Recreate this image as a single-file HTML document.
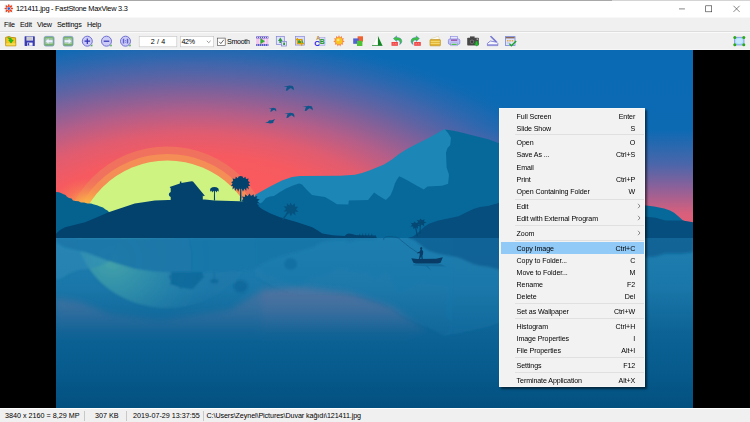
<!DOCTYPE html>
<html>
<head>
<meta charset="utf-8">
<title>121411.jpg - FastStone MaxView 3.3</title>
<style>
html,body{margin:0;padding:0;}
body{width:750px;height:422px;overflow:hidden;background:#000;position:relative;font-family:"Liberation Sans",sans-serif;color:#000;}
.abs{position:absolute;}
#titlebar{left:0;top:0;width:750px;height:18px;background:#fff;border-top:1px solid #a8a8a8;border-bottom:1px solid #f8f8f8;box-sizing:border-box;}
#title{left:15.9px;top:3.2px;font-size:7.4px;line-height:11px;white-space:nowrap;color:#000;letter-spacing:-0.26px;}
#menubar{left:0;top:18px;width:750px;height:13px;background:#f0f0f0;}
.mi{position:absolute;top:2.2px;font-size:7.2px;line-height:10px;white-space:nowrap;letter-spacing:-0.17px;}
#toolbar{left:0;top:31px;width:750px;height:19px;background:#f0f0f0;border-top:1px solid #dddddd;border-bottom:1px solid #f7f7f7;box-shadow:inset 0 1px 0 #fafafa;box-sizing:border-box;}
.tt{font-size:7.1px;line-height:10.4px;white-space:nowrap;letter-spacing:-0.15px;}
#statusbar{left:0;top:408px;width:750px;height:14px;background:#f0f0f0;border-top:1px solid #fff;box-sizing:border-box;}
.st{position:absolute;top:2.4px;font-size:7.2px;line-height:10px;white-space:nowrap;}
.ssep{position:absolute;top:2px;width:1px;height:10px;background:#c8c8c8;}
#scene{left:0;top:0;width:750px;height:422px;}
#menu{left:499px;top:108px;width:146.3px;height:278.8px;background:#f2f2f2;box-shadow:1.5px 1.5px 2px rgba(0,0,0,.55);border:1px solid #f7f7f7;box-sizing:border-box;}
.r{position:absolute;left:16.6px;width:118.6px;height:12px;font-size:7.1px;line-height:12px;white-space:nowrap;letter-spacing:-0.1px;}
.r b{position:absolute;right:0;top:0;font-weight:normal;}
.sep{position:absolute;left:14.6px;width:129.4px;height:1px;background:#e0e0e0;}
#hl{position:absolute;left:0.7px;top:132.9px;width:143.4px;height:11.8px;background:#91c9f7;}
.ar{position:absolute;left:137px;width:4px;height:6px;}
</style>
</head>
<body>
<svg id="scene" class="abs" viewBox="0 0 750 422">
<defs>
<clipPath id="wclip"><rect x="56" y="238" width="637" height="170"/></clipPath>
<clipPath id="imgclip"><rect x="56" y="50" width="637" height="358"/></clipPath>
<linearGradient id="skyL" x1="0" y1="50" x2="0" y2="240" gradientUnits="userSpaceOnUse">
<stop offset="0" stop-color="#0a6ab4"/>
<stop offset="0.42" stop-color="#0c6ab3"/>
<stop offset="0.6" stop-color="#4a66aa"/>
<stop offset="0.72" stop-color="#8a619a"/>
<stop offset="0.86" stop-color="#d85f7c"/>
<stop offset="1" stop-color="#f25d6c"/>
</linearGradient>
<radialGradient id="glow" cx="0" cy="0" r="1" gradientUnits="userSpaceOnUse" gradientTransform="translate(195 245) scale(415 215)">
<stop offset="0" stop-color="#fd5b58" stop-opacity="1"/>
<stop offset="0.3" stop-color="#fa5a5c" stop-opacity="1"/>
<stop offset="0.42" stop-color="#f65a60" stop-opacity="1"/>
<stop offset="0.52" stop-color="#e05c70" stop-opacity="1"/>
<stop offset="0.62" stop-color="#b85e88" stop-opacity="0.97"/>
<stop offset="0.72" stop-color="#8a6098" stop-opacity="0.9"/>
<stop offset="0.84" stop-color="#5a64a8" stop-opacity="0.7"/>
<stop offset="0.93" stop-color="#3a67ae" stop-opacity="0.35"/>
<stop offset="1" stop-color="#0a6ab4" stop-opacity="0"/>
</radialGradient>
<radialGradient id="hglow" cx="0.5" cy="0.5" r="0.5">
<stop offset="0" stop-color="#fcb846" stop-opacity="1"/>
<stop offset="0.3" stop-color="#faa84a" stop-opacity="0.8"/>
<stop offset="0.6" stop-color="#f8944c" stop-opacity="0.4"/>
<stop offset="1" stop-color="#f6804e" stop-opacity="0"/>
</radialGradient>
<linearGradient id="water" x1="0" y1="238" x2="0" y2="408" gradientUnits="userSpaceOnUse">
<stop offset="0" stop-color="#2080b1"/>
<stop offset="0.3" stop-color="#1a76a8"/>
<stop offset="0.55" stop-color="#0d6396"/>
<stop offset="0.8" stop-color="#065a8c"/>
<stop offset="1" stop-color="#03507f"/>
</linearGradient>
</defs>
<g clip-path="url(#imgclip)">
<rect x="56" y="50" width="637" height="190" fill="url(#skyL)"/>
<rect x="56" y="50" width="637" height="190" fill="url(#glow)"/>
<!-- sun -->
<circle cx="167.3" cy="252.5" r="106" fill="#f0715e"/>
<circle cx="167.3" cy="252.5" r="98.6" fill="#f48d56"/>
<ellipse cx="88" cy="205" rx="36" ry="27" fill="url(#hglow)"/>
<circle cx="167.3" cy="252.5" r="92" fill="#cff381"/>
<!-- left mountain -->
<path d="M56 192 L59 192.2 L61.5 193.2 L63.5 194.2 L65.5 195 L67 196.8 L69 198 L71.5 198.6 L73 200.4 L75.5 201 L78.5 201.2 L81 202.4 L84 202.6 L87.5 203.4 L91 203.6 L94 204.6 L97 205.2 L100 206.4 L103 207.6 L105.5 209.4 L107.5 210.4 L109 212 L120 240 L56 240Z" fill="#05628f"/>
<!-- back mountain light -->
<path d="M255 195 L262 191 L272 185.5 L282 180.5 L292 177 L300 176 L340 175.8 L355 174.8 L362 173 L370 170.3 L384 164.4 L392 159.5 L399 154.1 L407 149 L414 145.2 L422 141.2 L429 137.8 L437 133.2 L443.5 129.4 L447 129.6 L452 136 L452 240 L255 240Z" fill="#1c86b6"/>
<!-- mid mountains + right face -->
<path d="M256 205 L262 202.5 L266 198 L270 196.5 L274 196 L280 192 L286 188.5 L293 185.5 L299 183.6 L302 184.5 L306 189 L312 195 L318 196 L325 197 L331 200.5 L337 204.2 L348.3 204.4 L348.9 200.6 L368.1 200 L374.1 192.6 L378 195.2 L382 197.8 L385.9 200 L390.4 195.5 L393 189.5 L394.8 183.7 L397 179.5 L399.2 176.3 L403 178 L408.1 180.7 L416 185.2 L423.8 189.6 L427.4 186.6 L442.2 185.8 L448.1 183.7 L449 174.8 L446.6 167.4 L446 152.6 L447.5 148 L450.2 145.2 L451 137.8 L448 133 L445 129.5 L452 130.6 L458.5 131.8 L473.3 135.4 L488.1 139.3 L498.5 143.1 L520 150 L520 240 L256 240Z" fill="#07699a"/>
<!-- right small hill -->
<path d="M640 205 L646.4 205.4 L654.2 206.4 L664.2 208.5 L670 210.5 L674.1 212.8 L678 216 L682.7 220.2 L686 222 L693 224 L693 240 L640 240Z" fill="#07699a"/>
<!-- dark hills right -->
<path d="M408 238 L413 236.5 L420 231 L424 227 L428.9 223.7 L437.7 220.7 L448 218.5 L458.5 216.3 L466 212.5 L473.3 208.9 L480 207 L488.1 205.9 L498.5 203 L520 200 L560 203 L600 212 L640 216.5 L646.4 216.7 L655.6 217.7 L660 219 L665.6 220.6 L682.7 220.6 L693.3 222.4 L694 240 L408 240Z" fill="#054e7d"/>
<!-- island -->
<path d="M56 233.8 L60 230 L65 227.3 L75 224.8 L85 222.3 L97 217.3 L108.6 212.3 L122 207.8 L134.8 203.6 L145 202 L154.7 200.6 L168.3 199.9 L204.8 199.5 L214.7 200.4 L239.6 201.2 L249.6 202.6 L256 204.6 L262.4 209.2 L270 213.2 L280 217.3 L297.3 222.3 L312.3 227.3 L317 230 L322.3 233.5 L333 235.2 L344.7 236 L346.5 234.3 L348.5 233.5 L352 234 L354.7 234.8 L359.7 236 L376 236.3 L377 238.2 L56 238.2Z" fill="#04426e"/>
<!-- house -->
<path d="M170.7 200 L170.7 197 A2.6 2.6 0 0 1 170.7 192 L170.7 188.3 L169.6 186.9 L179.9 183.4 L179.9 181.6 L181.4 181.6 L181.4 182.9 L191.5 181.2 L193 181.6 L204.8 195.7 L203.8 196.3 L202.8 195.4 L202.8 200Z" fill="#04426e"/>
<!-- small palm -->
<path d="M213.9 200.6 L214 192 L214.9 192 L215.1 200.6Z" fill="#04426e"/>
<path d="M214.4 187 L216.4 187.2 L218.2 188.2 L218.8 190 L218.4 191.8 L217.4 190.6 L216.6 192.4 L215.4 190.8 L214.4 192.6 L213.4 190.8 L212.2 192.4 L211.4 190.6 L210.4 191.8 L210 190 L210.6 188.2 L212.4 187.2Z" fill="#04426e"/>
<!-- big palm -->
<path d="M239.9 201.6 L240.2 188 L241.3 188 L241.5 201.6Z" fill="#04426e"/>
<path d="M240.6 176 L242.6 176.6 L243.4 178.2 L245.4 176.8 L246 179 L248.6 178.6 L248 181 L250 182.2 L248.6 183.6 L250.2 186 L248.2 186 L248.8 189.4 L246.6 187.6 L246.2 191 L244.4 188.4 L243 191.8 L241.6 188.6 L240.6 189.6 L239.6 188.6 L238.2 191.8 L236.8 188.4 L235 191 L234.6 187.6 L232.4 189.4 L233 186 L231 186 L232.6 183.6 L231.2 182.2 L233.2 181 L232.6 178.6 L235.2 179 L235.8 176.8 L237.8 178.2 L238.6 176.6Z" fill="#04426e"/>
<!-- bush palm -->
<path d="M241.6 201.6 L243.2 198.6 L242 196.4 L244.8 197 L245.2 194.2 L247.6 196.2 L249.6 193.6 L251 196 L253.6 194.2 L254 196.8 L257.4 196 L256.4 198.6 L259.8 199.6 L257.4 201.2 L260 203.6 L257 203.6 L259.4 206.4 L252 204.4 L246 202.6Z" fill="#04426e"/>
<!-- slope palm -->
<path d="M282 219.3 L289.3 209.3 L290.5 210 L283.5 219.8Z" fill="#05527f"/>
<path d="M290.6 202.3 L292 205.5 L295 203.3 L294.8 206.8 L298.2 206.8 L296 209.3 L298.4 211.8 L295 211.8 L295.6 215.6 L292.6 213 L290.8 216.4 L289.5 213 L286 215 L287 211.6 L283.5 211.4 L286 209 L283.6 206.3 L287 206.6 L286.8 203.2 L289.4 205.4Z" fill="#05527f"/>
<!-- pier -->
<path d="M357 235.2 L376 235.4 L376 236.4 L357 236.4Z M359.5 233.8h.6v2h-.6z M362.5 233.6h.6v2h-.6z M365.5 233.4h.6v2h-.6z M368.5 233.6h.6v2h-.6z M371.5 233.8h.6v2h-.6z" fill="#04426e"/>
<!-- twin palms right -->
<path d="M416.8 236.5 L414.8 226 L415.8 225.8 L418.2 236.5Z M419.3 234 L420 223.5 L421 223.5 L420.6 234Z" fill="#054874"/>
<path d="M414.5 221.5 L416.3 223.3 L418.6 222.2 L418.3 224.3 L420.3 225.5 L417.8 226.3 L418 228.8 L415.6 227.2 L413.4 229.3 L413.2 226.6 L410.4 226.6 L412.3 224.8 L410.6 222.8 L413.3 223.3Z" fill="#054874"/>
<path d="M420.5 218.4 L422 220.3 L424.6 219.3 L424 221.5 L426.4 222.6 L423.8 223.6 L424.3 226.2 L421.6 224.6 L419.6 226.8 L419.2 224 L416.3 224 L418.3 222 L416.6 219.8 L419.3 220.4Z" fill="#054874"/>
<!-- birds -->
<g fill="#10548a">
<path transform="translate(288.9 88) scale(1)" d="M-5.4 -2.1 L-1.4 -1.9 L0.6 -2.5 L3.8 -1.9 L4.9 0 L4.8 2.3 L3.4 0.9 L2 0.1 L0.2 1 L-1.4 2.5 L-3.1 2.7 L-2.5 0.6 L-1.9 -1.1 Z"/>
<path transform="translate(272.6 109.7) scale(0.75)" d="M-5.4 -2.1 L-1.4 -1.9 L0.6 -2.5 L3.8 -1.9 L4.9 0 L4.8 2.3 L3.4 0.9 L2 0.1 L0.2 1 L-1.4 2.5 L-3.1 2.7 L-2.5 0.6 L-1.9 -1.1 Z"/>
<path transform="translate(307.8 108.2) scale(1)" d="M-5.4 -2.1 L-1.4 -1.9 L0.6 -2.5 L3.8 -1.9 L4.9 0 L4.8 2.3 L3.4 0.9 L2 0.1 L0.2 1 L-1.4 2.5 L-3.1 2.7 L-2.5 0.6 L-1.9 -1.1 Z"/>
<path transform="translate(289.5 115.2) scale(1)" d="M-5.4 -2.1 L-1.4 -1.9 L0.6 -2.5 L3.8 -1.9 L4.9 0 L4.8 2.3 L3.4 0.9 L2 0.1 L0.2 1 L-1.4 2.5 L-3.1 2.7 L-2.5 0.6 L-1.9 -1.1 Z"/>
<path transform="translate(270.6 121.3)" d="M-5.6 1.4 L-2.6 0.5 L-1.4 -1 L1.2 -1.1 L4.6 -2.4 L3 0 L2.6 1.8 L-0.6 2.1 L-2.4 1.6 Z"/>
</g>
<!-- water -->
<rect x="56" y="238" width="637" height="170" fill="url(#water)"/>
<!-- reflections -->
<defs>
<radialGradient id="fadeS" cx="112" cy="260" r="105" gradientUnits="userSpaceOnUse">
<stop offset="0" stop-color="#5cbca6" stop-opacity="0.62"/>
<stop offset="0.35" stop-color="#46a6ac" stop-opacity="0.48"/>
<stop offset="0.7" stop-color="#3492b0" stop-opacity="0.28"/>
<stop offset="1" stop-color="#2a86b0" stop-opacity="0.1"/>
</radialGradient>
<linearGradient id="fadeP" x1="0" y1="280" x2="0" y2="340" gradientUnits="userSpaceOnUse">
<stop offset="0" stop-color="#8c7098" stop-opacity="0.55"/>
<stop offset="0.5" stop-color="#78709c" stop-opacity="0.4"/>
<stop offset="1" stop-color="#5a6a9c" stop-opacity="0"/>
</linearGradient>
<linearGradient id="fadeM" x1="0" y1="238" x2="0" y2="340" gradientUnits="userSpaceOnUse">
<stop offset="0" stop-color="#2a88b8" stop-opacity="0.15"/>
<stop offset="0.4" stop-color="#2a88b8" stop-opacity="0.4"/>
<stop offset="1" stop-color="#1a74a6" stop-opacity="0.25"/>
</linearGradient>
<filter id="b1" x="-10%" y="-10%" width="120%" height="120%"><feGaussianBlur stdDeviation="1.2"/></filter>
<filter id="b3" x="-10%" y="-20%" width="120%" height="140%"><feGaussianBlur stdDeviation="3"/></filter>
</defs>
<g clip-path="url(#wclip)">
<g filter="url(#b3)">
<path d="M56 298 L80 302 L110 314 L160 320 L230 310 L262 290 L262 342 L56 342Z" fill="url(#fadeP)" opacity="0.75"/>
<path d="M262 290 L300 287 L350 293 L393 307 L426 330 L400 342 L262 342Z" fill="url(#fadeP)"/>
</g>
<g filter="url(#b1)">
<ellipse cx="167.3" cy="225" rx="92" ry="83" fill="url(#fadeS)"/>
<g transform="translate(0 238) scale(1 -0.9) translate(0 -238)">
<path d="M56 192 L59 192.3 L62.5 193.8 L66 196 L69 198.2 L75 201.1 L81 202.6 L87.5 203.6 L94 205 L100 206.8 L105 209.3 L109 212 L120 240 L56 240Z" fill="#2d8ab6" opacity="0.55"/>
<path d="M255 195 L262 191 L272 185.5 L282 180.5 L292 177 L300 176 L340 175.8 L355 174.8 L362 173 L370 170.3 L384 164.4 L392 159.5 L399 154.1 L407 149 L414 145.2 L422 141.2 L429 137.8 L437 133.2 L443.5 129.4 L447 129.6 L452 136 L452 240 L255 240Z" fill="url(#fadeM)"/>
<path d="M256 205 L262 202.5 L266 198 L270 196.5 L274 196 L280 192 L286 188.5 L293 185.5 L299 183.6 L302 184.5 L306 189 L312 195 L318 196 L325 197 L331 200.5 L337 204.2 L348.3 204.4 L348.9 200.6 L368.1 200 L374.1 192.6 L378 195.2 L382 197.8 L385.9 200 L390.4 195.5 L393 189.5 L394.8 183.7 L397 179.5 L399.2 176.3 L403 178 L408.1 180.7 L416 185.2 L423.8 189.6 L427.4 186.6 L442.2 185.8 L448.1 183.7 L449 174.8 L446.6 167.4 L446 152.6 L447.5 148 L450.2 145.2 L451 137.8 L448 133 L445 129.5 L452 130.6 L458.5 131.8 L473.3 135.4 L488.1 139.3 L498.5 143.1 L520 150 L520 240 L256 240Z" fill="#1c7aac" opacity="0.3"/>
<path d="M408 238 L413 236.5 L420 231 L424 227 L428.9 223.7 L437.7 220.7 L448 218.5 L458.5 216.3 L466 212.5 L473.3 208.9 L480 207 L488.1 205.9 L498.5 203 L520 200 L560 203 L600 212 L640 216.5 L646.4 216.7 L655.6 217.7 L660 219 L665.6 220.6 L682.7 220.6 L693.3 222.4 L694 240 L408 240Z" fill="#0d5e91" opacity="0.8"/>
<path d="M56 233.8 L60 230 L65 227.3 L75 224.8 L85 222.3 L97 217.3 L108.6 212.3 L122 207.8 L134.8 203.6 L145 202 L154.7 200.6 L168.3 199.9 L204.8 199.5 L214.7 200.4 L239.6 201.2 L249.6 202.6 L256 204.6 L262.4 209.2 L270 213.2 L280 217.3 L297.3 222.3 L312.3 227.3 L317 230 L322.3 233.5 L333 235.2 L344.7 236 L346.5 234.3 L348.5 233.5 L352 234 L354.7 234.8 L359.7 236 L376 236.3 L377 238.2 L56 238.2Z" fill="#1a76a8" opacity="0.92"/>
<path d="M170.7 200 L170.7 197 A2.6 2.6 0 0 1 170.7 192 L170.7 188.3 L169.6 186.9 L179.9 183.4 L179.9 181.6 L181.4 181.6 L181.4 182.9 L191.5 181.2 L193 181.6 L204.8 195.7 L203.8 196.3 L202.8 195.4 L202.8 200Z" fill="#12699b" opacity="0.9"/>
<ellipse cx="214.4" cy="189.8" rx="4.2" ry="2.6" fill="#12699b" opacity="0.9"/>
<rect x="213.9" y="192" width="1.1" height="8.6" fill="#12699b" opacity="0.9"/>
<circle cx="240.6" cy="184" r="7.2" fill="#12699b" opacity="0.85"/>
<circle cx="290.6" cy="209" r="6.5" fill="#12699b" opacity="0.6"/>
</g>
</g>
</g>
<!-- boat -->
<path d="M411.3 258.2 L417 259 L436 258.8 L442.8 257.2 L440.6 262.8 L438 263.6 L416 263.6 L413.4 262.8Z" fill="#083c66"/>
<path d="M420.6 249.2 a1.1 1.1 0 1 1 1.2 0 L423.2 251.4 L423 254.4 L422.4 255.2 L422.8 259 L421.6 259 L421.2 256.2 L420 259 L418.8 259 L419.8 254.8 L419.6 253 L417.4 253.4 L417.2 252.6 L419.8 251.4Z" fill="#083c66"/>
<path d="M417.6 252.7 L410 247.5 L405 243.5 L401.3 240.6 L399 238.4 L397 237.5 L392 236.6 L388.5 236.4 L385.5 237 L383.6 238.5 L383.8 240.2" stroke="#0d4a75" stroke-width="0.45" fill="none"/>
<path d="M413 264.2 L441 264.2 L446 266.5 L428 266 L431 270.5 L426 266.3 L414 265.6Z" fill="#0f5e90" opacity="0.55"/>

</g>
</svg>

<div id="titlebar" class="abs"></div>
<div class="abs" style="left:612px;top:0;width:138px;height:1px;background:#d4d4d4"></div>
<div id="title" class="abs">121411.jpg - FastStone MaxView 3.3</div>
<div id="menubar" class="abs">
<span class="mi" style="left:4px">File</span>
<span class="mi" style="left:20px">Edit</span>
<span class="mi" style="left:37px">View</span>
<span class="mi" style="left:57px">Settings</span>
<span class="mi" style="left:87px">Help</span>
</div>
<div id="toolbar" class="abs"></div>
<svg id="tb" class="abs" style="left:0;top:0;width:750px;height:50px" viewBox="0 0 750 50">
<!-- app icon -->
<g transform="translate(8.8 8.6)">
<rect x="-4.4" y="-4.2" width="8.8" height="8.6" rx="1" fill="#eef3f3"/>
<g stroke="#f03c14" stroke-width="1.5" stroke-linecap="round">
<path d="M0 -3.5V3.5M-3.5 0H3.5M-2.5 -2.5L2.5 2.5M-2.5 2.5L2.5 -2.5"/>
</g>
<circle r="1.9" fill="#f4ecec"/>
<circle r="1.3" fill="#1460e0"/>
</g>
<!-- window controls -->
<path d="M679 8.9h5.9" stroke="#333" stroke-width="0.6"/>
<rect x="705.7" y="5.8" width="6" height="6" fill="none" stroke="#333" stroke-width="0.6"/>
<path d="M733.5 5.8l6.1 6.1M739.6 5.8l-6.1 6.1" stroke="#333" stroke-width="0.6"/>
<!-- open folder -->
<path d="M5.6 37.4 L9.2 36.4 L11 37.4 L15.6 37.8 L15.8 45.8 L5.8 45.8Z" fill="#f2c81e" stroke="#b88c0c" stroke-width="0.9"/>
<path d="M6.2 43.2h9.2v2.2h-9.2z" fill="#f8dc58"/>
<path d="M7.6 37.8 Q11.6 37 12 40 L13.4 40 L11 43.2 L8.6 40 L10 40 Q9.8 38.6 7.6 37.8Z" fill="#1cc424" stroke="#0a8a14" stroke-width="0.35"/>
<!-- save -->
<rect x="24.6" y="36.2" width="10.2" height="9.8" rx="0.6" fill="#3a3cb4"/>
<rect x="26.4" y="36.6" width="6.6" height="4" fill="#d8d8dc"/>
<path d="M27.4 38h4.6M27.4 39.2h4.6" stroke="#a8a8b4" stroke-width="0.4"/>
<rect x="27" y="42.6" width="5.6" height="3.2" fill="#f4f4f8"/>
<rect x="27.6" y="43.2" width="1.6" height="2.2" fill="#3a3cb4"/>
<!-- prev -->
<rect x="44.2" y="36.4" width="9.8" height="9.6" rx="1.6" fill="#78b26e" stroke="#7a98c2" stroke-width="0.8"/>
<rect x="45.4" y="38.2" width="7.4" height="5.8" rx="0.8" fill="#a4d09c"/>
<path d="M45.4 41.2 L48.8 38.2 L48.8 40 L52.8 40 L52.8 42.4 L48.8 42.4 L48.8 44.2Z" fill="#f0f2ff" stroke="#8aa0c8" stroke-width="0.3"/>
<!-- next -->
<rect x="63.2" y="36.4" width="9.8" height="9.6" rx="1.6" fill="#78b26e" stroke="#7a98c2" stroke-width="0.8"/>
<rect x="64.4" y="38.2" width="7.4" height="5.8" rx="0.8" fill="#a4d09c"/>
<path d="M71.8 41.2 L68.4 38.2 L68.4 40 L64.4 40 L64.4 42.4 L68.4 42.4 L68.4 44.2Z" fill="#f0f2ff" stroke="#8aa0c8" stroke-width="0.3"/>
<!-- zoom in -->
<g id="zc">
<circle cx="87.3" cy="41.2" r="5" fill="#ccccf6" stroke="#7070d4" stroke-width="1"/>
<path d="M90.4 46.2 L92.4 46.2 L92.4 44.2Z" fill="#28a028"/>
</g>
<path d="M84.5 41.2h5.6M87.3 38.4v5.6" stroke="#3030b4" stroke-width="1.2"/>
<!-- zoom out -->
<circle cx="106.5" cy="41.2" r="5" fill="#ccccf6" stroke="#7070d4" stroke-width="1"/>
<path d="M109.6 46.2 L111.6 46.2 L111.6 44.2Z" fill="#28a028"/>
<path d="M103.7 41.2h5.6" stroke="#3030b4" stroke-width="1.2"/>
<!-- 1:1 -->
<circle cx="125.5" cy="41.2" r="5" fill="#ccccf6" stroke="#7070d4" stroke-width="1"/>
<path d="M128.6 46.2 L130.6 46.2 L130.6 44.2Z" fill="#28a028"/>
<path d="M123.5 38.8v4.8M127.5 38.8v4.8" stroke="#6060cc" stroke-width="1.5"/>
<path d="M125.5 40v0.8M125.5 41.8v0.8" stroke="#4a4ac0" stroke-width="0.7"/>
<!-- input -->
<rect x="139.2" y="36.6" width="37.6" height="10.2" fill="#fff" stroke="#c4c4c4" stroke-width="0.6"/>
<rect x="180.5" y="36.6" width="33.2" height="10.2" fill="#fff" stroke="#c4c4c4" stroke-width="0.6"/>
<path d="M206.8 40.8 L208.7 42.7 L210.6 40.8" fill="none" stroke="#555" stroke-width="0.6"/>
<rect x="217.6" y="38.1" width="7.6" height="7.6" fill="#fff" stroke="#444" stroke-width="0.6"/>
<path d="M219.2 41.8 L220.8 43.6 L223.8 39.8" fill="none" stroke="#222" stroke-width="0.7"/>
<!-- slideshow -->
<rect x="256.2" y="36.4" width="12.2" height="9.6" fill="#f4c4f0"/>
<rect x="256.2" y="36.4" width="12.2" height="2" fill="#5a5ac8"/>
<rect x="256.2" y="44" width="12.2" height="2" fill="#5a5ac8"/>
<path d="M257 37.4h11M257 45h11" stroke="#fff" stroke-width="0.8" stroke-dasharray="1 1"/>
<path d="M259.8 38.6v5.2M265.6 38.6v5.2" stroke="#fff" stroke-width="0.5"/>
<path d="M260.6 38.6 L264.6 41.2 L260.6 43.8Z" fill="#28b428" stroke="#148a14" stroke-width="0.3"/>
<!-- resize -->
<rect x="276.3" y="36.5" width="8" height="8" fill="#e2e2fa" stroke="#8080d4" stroke-width="0.7"/>
<path d="M280.3 37.6 L282.6 41 L281.2 41 L281.2 43 L279.4 43 L279.4 41 L278 41Z" fill="#2a9a3a"/>
<rect x="281.6" y="41.4" width="5" height="4.6" fill="#e2e2fa" stroke="#8080d4" stroke-width="0.7"/>
<rect x="283.2" y="42.6" width="1.8" height="2.4" fill="#2a9a3a"/>
<!-- crop -->
<rect x="295.5" y="36.5" width="9" height="8.6" fill="#dcdcf8" stroke="#8888d8" stroke-width="0.7"/>
<path d="M297 43.6 L299 39 L300.6 41.4 L302 38.4 L303.6 43.6Z" fill="#2aa040"/>
<path d="M297.4 38v5.6h6.4M296 39.6h5.6v6.2" fill="none" stroke="#dca000" stroke-width="1.25"/>
<!-- text -->
<rect x="319.4" y="37.4" width="5.6" height="8" fill="#d8d8f8" stroke="#9a9ae0" stroke-width="0.5"/>
<text x="316.2" y="40.4" font-family="Liberation Sans,sans-serif" font-weight="bold" font-size="5.2" fill="#b08028">A</text>
<text x="314.2" y="46.2" font-family="Liberation Sans,sans-serif" font-weight="bold" font-size="7.6" fill="#1818e8">C</text>
<text x="319.8" y="44.2" font-family="Liberation Sans,sans-serif" font-weight="bold" font-size="6.8" fill="#189a28">B</text>
<!-- sun -->
<g transform="translate(339 40.9)">
<path d="M0 -5.6L1.1 -3.6L3 -4.8L3 -2.6L5.3 -2.4L3.9 -0.8L5.6 0.8L3.6 1.6L4.2 3.8L2 3.4L1.4 5.5L0 3.9L-1.4 5.5L-2 3.4L-4.2 3.8L-3.6 1.6L-5.6 0.8L-3.9 -0.8L-5.3 -2.4L-3 -2.6L-3 -4.8L-1.1 -3.6Z" fill="#f4864a"/>
<circle r="3.4" fill="#f8c424"/>
<circle cx="-0.8" cy="-0.9" r="1.3" fill="#fce68a"/>
</g>
<!-- colors -->
<rect x="357.6" y="36.3" width="5.4" height="5.4" fill="#f2622e"/>
<rect x="353.2" y="38.4" width="5.6" height="5.4" fill="#5262d2"/>
<rect x="357" y="40.8" width="5.4" height="5.2" fill="#4cc234"/>
<!-- sharpen -->
<path d="M377.6 36.2 L377.6 45 L372.4 45Z" fill="#fff" stroke="#c8d8c8" stroke-width="0.3"/>
<path d="M378 36 L382.4 45.6 L378 45.6Z" fill="#128424"/>
<path d="M372 45.5h10.4" stroke="#128424" stroke-width="0.7"/>
<!-- rotate left -->
<rect x="391.5" y="42" width="6.4" height="3.8" fill="#f04444"/>
<path d="M392.8 43.1l1.4 1.6M394.2 43.1l-1.4 1.6M395.2 43.1l1.4 1.6M396.6 43.1l-1.4 1.6" stroke="#fbb" stroke-width="0.4"/>
<path d="M393.4 38.6 L396.6 35.9 L396.6 37.5 Q402 37.6 401.8 41.6 Q401.6 43.6 399.6 44.6 Q400.6 42.6 399.6 41 Q398.8 39.9 396.6 39.9 L396.6 41.4Z" fill="#3cc43c" stroke="#3a62c8" stroke-width="0.4"/>
<!-- rotate right -->
<rect x="414.2" y="42" width="6.6" height="3.8" fill="#f04444"/>
<path d="M415.5 43.1l1.4 1.6M416.9 43.1l-1.4 1.6M417.9 43.1l1.4 1.6M419.3 43.1l-1.4 1.6" stroke="#fbb" stroke-width="0.4"/>
<path d="M419.4 38.6 L416.2 35.9 L416.2 37.5 Q410.8 37.6 411 41.6 Q411.2 43.6 413.2 44.6 Q412.2 42.6 413.2 41 Q414 39.9 416.2 39.9 L416.2 41.4Z" fill="#3cc43c" stroke="#3a62c8" stroke-width="0.4"/>
<!-- email -->
<path d="M431.4 38.6 L438.4 36.3 L439.6 39.6 L431.6 40.4Z" fill="#fbfbf4" stroke="#c8b060" stroke-width="0.3"/>
<rect x="430" y="39.6" width="10.4" height="6.2" rx="0.6" fill="#e2b432" stroke="#b88a18" stroke-width="0.6"/>
<path d="M430.6 41.4h9.2M430.6 43.4h9.2" stroke="#f6e07a" stroke-width="0.9"/>
<!-- print -->
<rect x="450.6" y="36.4" width="6.8" height="3.4" fill="#e8e8fc" stroke="#8484e0" stroke-width="0.6"/>
<rect x="448.4" y="39" width="11.4" height="5.4" rx="1.4" fill="#c4c4f4" stroke="#7c7ce0" stroke-width="0.7"/>
<rect x="451" y="39.4" width="6.2" height="1.6" fill="#a060b0"/>
<rect x="450.8" y="43" width="6.6" height="2.8" fill="#f0f0ff" stroke="#8484e0" stroke-width="0.5"/>
<rect x="451.4" y="43.8" width="5.4" height="1" fill="#28b428"/>
<!-- camera -->
<rect x="467.2" y="37.8" width="11.6" height="7.8" rx="0.8" fill="#484848"/>
<rect x="470" y="36.4" width="4.6" height="2" fill="#484848"/>
<circle cx="472" cy="41.7" r="2.7" fill="#707070" stroke="#2a2a2a" stroke-width="0.5"/>
<circle cx="472" cy="41.7" r="1.2" fill="#3a3a3a"/>
<rect x="476.6" y="38.6" width="1.4" height="1" fill="#ddd"/>
<path d="M475.6 41.2h2v2.2h1.4l-2.4 2.8l-2.4-2.8h1.4z" fill="#20c030" stroke="#108a1c" stroke-width="0.3"/>
<!-- scanner -->
<path d="M490.2 36.6 L491.4 36.2 L496.8 41.6 L496 42.4Z" fill="#7a7ad8" stroke="#4a4ac0" stroke-width="0.4"/>
<path d="M487.4 43.4 L490.4 41 L496.6 42.2 L497.8 43.4 L497.8 45.6 L487.4 45.6Z" fill="#f6f6ff" stroke="#5a5ac8" stroke-width="0.7"/>
<path d="M487.8 44.5h9.8" stroke="#5a5ac8" stroke-width="0.5"/>
<!-- settings -->
<rect x="505.4" y="36.6" width="9.6" height="8.8" fill="#dfe4fb" stroke="#7484d6" stroke-width="0.8"/>
<rect x="505.8" y="37" width="8.8" height="1.4" fill="#8a6a5a"/>
<path d="M507 40h1.4v1.6h-1.4zM509.4 40h1.4v1.6h-1.4zM511.8 40h1.4v1.6h-1.4z" fill="#e8a838"/>
<path d="M506.8 43h3" stroke="#9aa6e0" stroke-width="0.6"/>
<path d="M509.4 43.6 L511.4 45.8 L516.2 41" fill="none" stroke="#1aa428" stroke-width="1.4"/>
<!-- fullscreen -->
<rect x="734.6" y="37.2" width="9.4" height="7.8" fill="#a6dcfa" stroke="#6a7ae0" stroke-width="0.6"/>
<ellipse cx="739.3" cy="41" rx="3.4" ry="2.8" fill="#d0eefd" opacity="0.8"/>
<g fill="#2aa818"><circle cx="734.8" cy="37.4" r="1.5"/><circle cx="743.8" cy="37.4" r="1.5"/><circle cx="734.8" cy="44.8" r="1.5"/><circle cx="743.8" cy="44.8" r="1.5"/></g>
</svg>
<span class="abs tt" style="left:139.2px;top:36.6px;width:37.6px;text-align:center;word-spacing:0.6px">2 / 4</span>
<span class="abs tt" style="left:181.4px;top:36.6px;letter-spacing:-0.3px">42%</span>
<span class="abs tt" style="left:227px;top:36.6px;letter-spacing:-0.32px">Smooth</span>


<div id="statusbar" class="abs">
<span class="st" style="left:5px">3840 x 2160 = 8,29 MP</span>
<span class="ssep" style="left:84px"></span>
<span class="st" style="left:95px">307 KB</span>
<span class="ssep" style="left:126px"></span>
<span class="st" style="left:133px">2019-07-29 13:37:55</span>
<span class="ssep" style="left:203px"></span>
<span class="st" style="left:206.5px;letter-spacing:-0.1px">C:\Users\Zeynel\Pictures\Duvar kağıdı\121411.jpg</span>
</div>

<div id="menu" class="abs">
<div id="hl"></div>
<div class="r" style="top:1.5px">Full Screen<b>Enter</b></div>
<div class="r" style="top:13.6px">Slide Show<b>S</b></div>
<div class="r" style="top:28.4px">Open<b>O</b></div>
<div class="r" style="top:40.4px">Save As ...<b>Ctrl+S</b></div>
<div class="r" style="top:52.7px">Email</div>
<div class="r" style="top:64.8px">Print<b>Ctrl+P</b></div>
<div class="r" style="top:76.9px">Open Containing Folder<b>W</b></div>
<div class="r" style="top:92.0px">Edit</div>
<svg class="ar" style="top:94.4px" viewBox="0 0 4 6"><path d="M1 0.8 L3 3 L1 5.2" fill="none" stroke="#333" stroke-width="0.55"/></svg>
<div class="r" style="top:104.0px">Edit with External Program</div>
<svg class="ar" style="top:106.4px" viewBox="0 0 4 6"><path d="M1 0.8 L3 3 L1 5.2" fill="none" stroke="#333" stroke-width="0.55"/></svg>
<div class="r" style="top:118.6px">Zoom</div>
<svg class="ar" style="top:121.0px" viewBox="0 0 4 6"><path d="M1 0.8 L3 3 L1 5.2" fill="none" stroke="#333" stroke-width="0.55"/></svg>
<div class="r" style="top:133.6px">Copy Image<b>Ctrl+C</b></div>
<div class="r" style="top:145.7px">Copy to Folder...<b>C</b></div>
<div class="r" style="top:157.8px">Move to Folder...<b>M</b></div>
<div class="r" style="top:170.0px">Rename<b>F2</b></div>
<div class="r" style="top:182.2px">Delete<b>Del</b></div>
<div class="r" style="top:197.1px">Set as Wallpaper<b>Ctrl+W</b></div>
<div class="r" style="top:211.9px">Histogram<b>Ctrl+H</b></div>
<div class="r" style="top:224.0px">Image Properties<b>I</b></div>
<div class="r" style="top:236.1px">File Properties<b>Alt+I</b></div>
<div class="r" style="top:251.1px">Settings<b>F12</b></div>
<div class="r" style="top:265.9px">Terminate Application<b>Alt+X</b></div>
<div class="sep" style="top:25.1px"></div>
<div class="sep" style="top:89.6px"></div>
<div class="sep" style="top:116.2px"></div>
<div class="sep" style="top:131.0px"></div>
<div class="sep" style="top:194.1px"></div>
<div class="sep" style="top:209.1px"></div>
<div class="sep" style="top:248.1px"></div>
<div class="sep" style="top:263.1px"></div>
</div>
</body>
</html>
